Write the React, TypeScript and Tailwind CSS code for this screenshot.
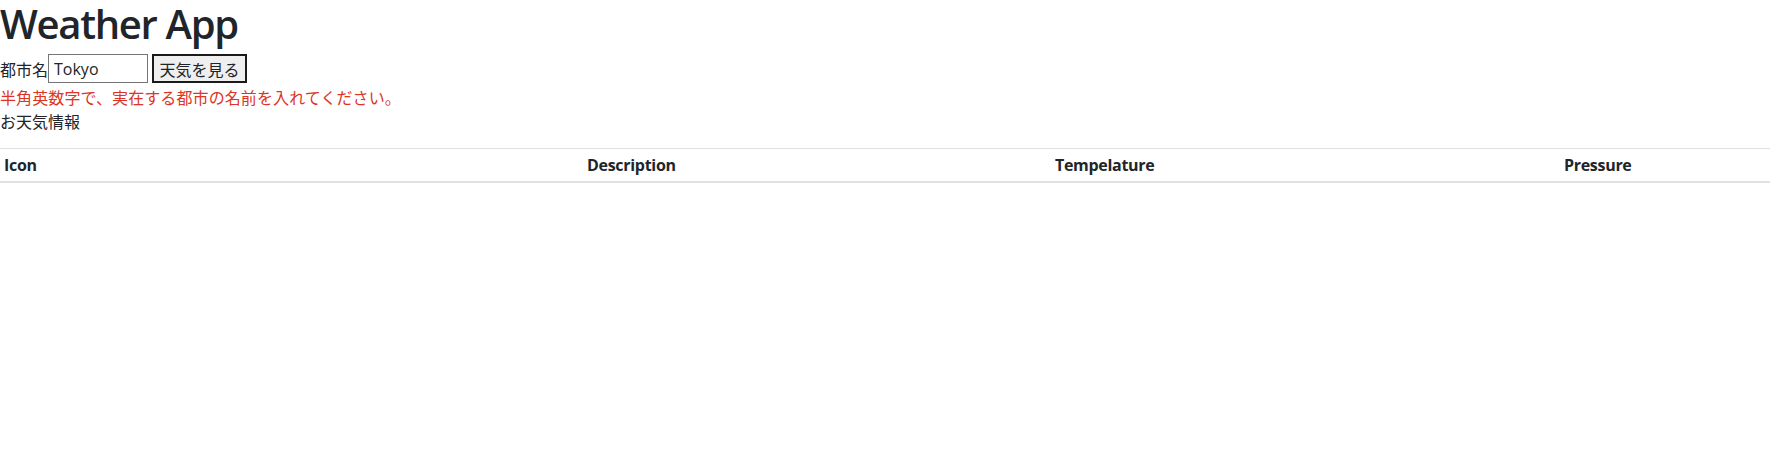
export default function App() {
  return (
    <div className="min-h-screen bg-white text-[#212529] text-base leading-6 font-['Open_Sans','Noto_Sans_CJK_JP',sans-serif]">
      {/* Header */}
      <h1 className="text-[40px] leading-[48px] font-semibold tracking-[-1.3px]">Weather App</h1>

      {/* Search form */}
      <div className="mt-[6px] flex h-[29px] items-center">
        <label className="font-['Noto_Sans_CJK_JP',sans-serif]">都市名</label>
        <input
          type="text"
          defaultValue="Tokyo"
          className="h-[29px] w-[100px] border border-[#767676] px-[5px] text-base outline-none"
        />
        <button className="ml-1 h-[29px] w-[95px] border-2 border-[#1a1a1a] bg-[#efefef] font-['Noto_Sans_CJK_JP',sans-serif] text-base">
          天気を見る
        </button>
      </div>
      <p className="mt-[2px] h-6 font-['Noto_Sans_CJK_JP',sans-serif] tracking-[0.1px] text-[#dd3426]">
        半角英数字で、実在する都市の名前を入れてください。
      </p>
      <p className="h-6 font-['Noto_Sans_CJK_JP',sans-serif]">お天気情報</p>

      {/* Weather table */}
      <table className="mt-[15px] w-full table-fixed border-collapse text-left">
        <thead>
          <tr>
            <th className="w-[583px] border-t border-b-2 border-[#dee2e6] px-1 py-1 font-bold tracking-[-0.3px]">Icon</th>
            <th className="w-[468px] border-t border-b-2 border-[#dee2e6] px-1 py-1 font-bold tracking-[-0.3px]">Description</th>
            <th className="w-[509px] border-t border-b-2 border-[#dee2e6] px-1 py-1 font-bold tracking-[-0.3px]">Tempelature</th>
            <th className="border-t border-b-2 border-[#dee2e6] px-1 py-1 font-bold tracking-[-0.3px]">Pressure</th>
          </tr>
        </thead>
        <tbody></tbody>
      </table>
    </div>
  )
}
